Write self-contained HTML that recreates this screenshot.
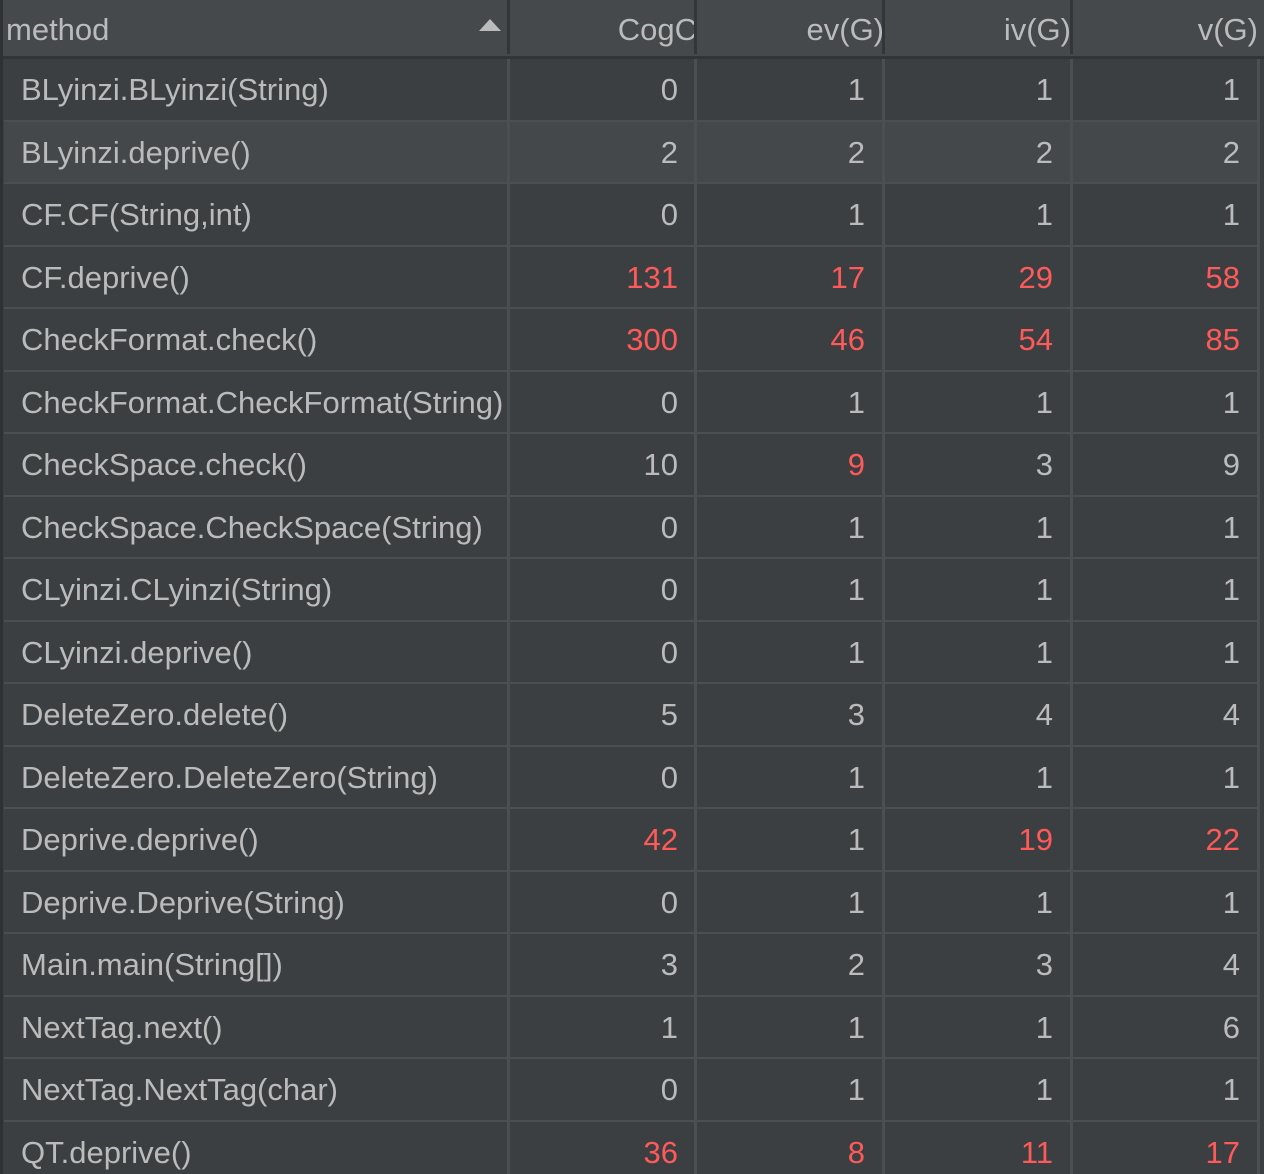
<!DOCTYPE html>
<html><head><style>
html,body{margin:0;width:1264px;height:1174px;overflow:hidden}
body{background:#3c3f41;font-family:"Liberation Sans","DejaVu Sans",sans-serif;color:#bbbbbb;position:relative}
.l{position:absolute;left:0;top:0;width:3px;height:1174px;background:#2f3133}
.h{position:absolute;left:3px;top:0;width:1261px;height:56px;background:#45494c}
.hb{position:absolute;left:0;top:56px;width:1264px;height:3px;background:#323436}
.ht{position:absolute;top:12px;font-size:31px;white-space:nowrap}
.hs{position:absolute;top:0;width:3px;height:54px;background:#333537}
.r{position:absolute;left:4px;width:1253px;height:60.5px;border-bottom:2px solid #4c4f52}
.r.s{background:#45484b}
.c{position:absolute;top:13px;font-size:31px;white-space:nowrap}
.n{text-align:right;width:150px}
.red{color:#ff5a5a}
.v{position:absolute;top:59px;width:3px;height:1115px;background:#4c4f52}
</style></head><body>
<div class="h"></div>
<div class="ht" style="left:6px">method</div>
<div style="position:absolute;left:479px;top:19px;width:0;height:0;border-left:11px solid transparent;border-right:11px solid transparent;border-bottom:12px solid #bbbbbb"></div>
<div class="ht" style="left:546px;width:151px;text-align:right;overflow:hidden">CogC</div>
<div class="ht" style="left:730px;width:154px;text-align:right">ev(G)</div>
<div class="ht" style="left:918px;width:153px;text-align:right">iv(G)</div>
<div class="ht" style="left:1105px;width:153px;text-align:right">v(G)</div>
<div class="hs" style="left:507px"></div><div class="hs" style="left:694px"></div><div class="hs" style="left:882px"></div><div class="hs" style="left:1070px"></div>
<div class="hb"></div>
<div class="r" style="top:59px"><div class="c" style="left:17px">BLyinzi.BLyinzi(String)</div><div class="c n" style="left:524px">0</div><div class="c n" style="left:711px">1</div><div class="c n" style="left:899px">1</div><div class="c n" style="left:1086px">1</div></div>
<div class="r s" style="top:121.5px"><div class="c" style="left:17px">BLyinzi.deprive()</div><div class="c n" style="left:524px">2</div><div class="c n" style="left:711px">2</div><div class="c n" style="left:899px">2</div><div class="c n" style="left:1086px">2</div></div>
<div class="r" style="top:184px"><div class="c" style="left:17px">CF.CF(String,int)</div><div class="c n" style="left:524px">0</div><div class="c n" style="left:711px">1</div><div class="c n" style="left:899px">1</div><div class="c n" style="left:1086px">1</div></div>
<div class="r" style="top:246.5px"><div class="c" style="left:17px">CF.deprive()</div><div class="c n red" style="left:524px">131</div><div class="c n red" style="left:711px">17</div><div class="c n red" style="left:899px">29</div><div class="c n red" style="left:1086px">58</div></div>
<div class="r" style="top:309px"><div class="c" style="left:17px">CheckFormat.check()</div><div class="c n red" style="left:524px">300</div><div class="c n red" style="left:711px">46</div><div class="c n red" style="left:899px">54</div><div class="c n red" style="left:1086px">85</div></div>
<div class="r" style="top:371.5px"><div class="c" style="left:17px">CheckFormat.CheckFormat(String)</div><div class="c n" style="left:524px">0</div><div class="c n" style="left:711px">1</div><div class="c n" style="left:899px">1</div><div class="c n" style="left:1086px">1</div></div>
<div class="r" style="top:434px"><div class="c" style="left:17px">CheckSpace.check()</div><div class="c n" style="left:524px">10</div><div class="c n red" style="left:711px">9</div><div class="c n" style="left:899px">3</div><div class="c n" style="left:1086px">9</div></div>
<div class="r" style="top:496.5px"><div class="c" style="left:17px">CheckSpace.CheckSpace(String)</div><div class="c n" style="left:524px">0</div><div class="c n" style="left:711px">1</div><div class="c n" style="left:899px">1</div><div class="c n" style="left:1086px">1</div></div>
<div class="r" style="top:559px"><div class="c" style="left:17px">CLyinzi.CLyinzi(String)</div><div class="c n" style="left:524px">0</div><div class="c n" style="left:711px">1</div><div class="c n" style="left:899px">1</div><div class="c n" style="left:1086px">1</div></div>
<div class="r" style="top:621.5px"><div class="c" style="left:17px">CLyinzi.deprive()</div><div class="c n" style="left:524px">0</div><div class="c n" style="left:711px">1</div><div class="c n" style="left:899px">1</div><div class="c n" style="left:1086px">1</div></div>
<div class="r" style="top:684px"><div class="c" style="left:17px">DeleteZero.delete()</div><div class="c n" style="left:524px">5</div><div class="c n" style="left:711px">3</div><div class="c n" style="left:899px">4</div><div class="c n" style="left:1086px">4</div></div>
<div class="r" style="top:746.5px"><div class="c" style="left:17px">DeleteZero.DeleteZero(String)</div><div class="c n" style="left:524px">0</div><div class="c n" style="left:711px">1</div><div class="c n" style="left:899px">1</div><div class="c n" style="left:1086px">1</div></div>
<div class="r" style="top:809px"><div class="c" style="left:17px">Deprive.deprive()</div><div class="c n red" style="left:524px">42</div><div class="c n" style="left:711px">1</div><div class="c n red" style="left:899px">19</div><div class="c n red" style="left:1086px">22</div></div>
<div class="r" style="top:871.5px"><div class="c" style="left:17px">Deprive.Deprive(String)</div><div class="c n" style="left:524px">0</div><div class="c n" style="left:711px">1</div><div class="c n" style="left:899px">1</div><div class="c n" style="left:1086px">1</div></div>
<div class="r" style="top:934px"><div class="c" style="left:17px">Main.main(String[])</div><div class="c n" style="left:524px">3</div><div class="c n" style="left:711px">2</div><div class="c n" style="left:899px">3</div><div class="c n" style="left:1086px">4</div></div>
<div class="r" style="top:996.5px"><div class="c" style="left:17px">NextTag.next()</div><div class="c n" style="left:524px">1</div><div class="c n" style="left:711px">1</div><div class="c n" style="left:899px">1</div><div class="c n" style="left:1086px">6</div></div>
<div class="r" style="top:1059px"><div class="c" style="left:17px">NextTag.NextTag(char)</div><div class="c n" style="left:524px">0</div><div class="c n" style="left:711px">1</div><div class="c n" style="left:899px">1</div><div class="c n" style="left:1086px">1</div></div>
<div class="r" style="top:1121.5px"><div class="c" style="left:17px">QT.deprive()</div><div class="c n red" style="left:524px">36</div><div class="c n red" style="left:711px">8</div><div class="c n red" style="left:899px">11</div><div class="c n red" style="left:1086px">17</div></div>
<div class="v" style="left:507px"></div><div class="v" style="left:694px"></div><div class="v" style="left:882px"></div><div class="v" style="left:1070px"></div><div class="v" style="left:1257px"></div>
<div class="l"></div>
</body></html>
